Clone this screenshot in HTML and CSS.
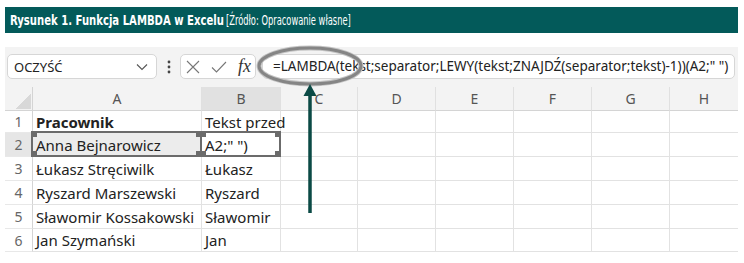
FILE: index.html
```html
<!DOCTYPE html>
<html lang="pl">
<head>
    <meta charset="UTF-8">
    <meta name="viewport" content="width=device-width, initial-scale=1.0">
    <title>Funkcja LAMBDA w Excelu</title>
    <link rel="stylesheet" href="styles.css">
</head>
<body>
    <div class="page">
        <div class="caption">
            <b>Rysunek 1. Funkcja LAMBDA w Excelu</b><span>[Źródło: Opracowanie własne]</span>
        </div>

        <div class="excel">
            <div class="toolbar">
                <div class="namebox">
                    <span>OCZYŚĆ</span>
                    <svg width="12" height="8" viewBox="0 0 12 8"><path d="M1 1.5 L6 6.5 L11 1.5" fill="none" stroke="#555" stroke-width="1.1"/></svg>
                </div>
                <div class="dots">
                    <svg width="4" height="14" viewBox="0 0 4 14"><circle cx="2" cy="2" r="1.4" fill="#444"/><circle cx="2" cy="7" r="1.4" fill="#444"/><circle cx="2" cy="12" r="1.4" fill="#444"/></svg>
                </div>
                <div class="fxbox">
                    <svg width="14" height="14" viewBox="0 0 14 14"><path d="M1 1 L13 13 M13 1 L1 13" stroke="#777" stroke-width="1.1" fill="none"/></svg>
                    <svg width="16" height="12" viewBox="0 0 16 12"><path d="M1 6.5 L5.5 11 L15 1" stroke="#777" stroke-width="1.1" fill="none"/></svg>
                    <span class="fx">fx</span>
                </div>
                <div class="formula">=LAMBDA(tekst;separator;LEWY(tekst;ZNAJDŹ(separator;tekst)-1))(A2;" ")</div>
            </div>

            <div class="sheet">
                <div class="corner"></div>
                <div class="colhead">A</div>
                <div class="colhead active">B</div>
                <div class="colhead">C</div>
                <div class="colhead">D</div>
                <div class="colhead">E</div>
                <div class="colhead">F</div>
                <div class="colhead">G</div>
                <div class="colhead last">H</div>

                <div class="rowhead r1">1</div>
                <div class="cell bold">Pracownik</div>
                <div class="cell">Tekst przed</div>
                <div class="cell"></div><div class="cell"></div><div class="cell"></div><div class="cell"></div><div class="cell"></div><div class="cell last"></div>

                <div class="rowhead active">2</div>
                <div class="cell ref">Anna Bejnarowicz</div>
                <div class="cell ref edit">A2;" ")</div>
                <div class="cell"></div><div class="cell"></div><div class="cell"></div><div class="cell"></div><div class="cell"></div><div class="cell last"></div>

                <div class="rowhead">3</div>
                <div class="cell">Łukasz Stręciwilk</div>
                <div class="cell">Łukasz</div>
                <div class="cell"></div><div class="cell"></div><div class="cell"></div><div class="cell"></div><div class="cell"></div><div class="cell last"></div>

                <div class="rowhead">4</div>
                <div class="cell">Ryszard Marszewski</div>
                <div class="cell">Ryszard</div>
                <div class="cell"></div><div class="cell"></div><div class="cell"></div><div class="cell"></div><div class="cell"></div><div class="cell last"></div>

                <div class="rowhead">5</div>
                <div class="cell">Sławomir Kossakowski</div>
                <div class="cell">Sławomir</div>
                <div class="cell"></div><div class="cell"></div><div class="cell"></div><div class="cell"></div><div class="cell"></div><div class="cell last"></div>

                <div class="rowhead">6</div>
                <div class="cell">Jan Szymański</div>
                <div class="cell">Jan</div>
                <div class="cell"></div><div class="cell"></div><div class="cell"></div><div class="cell"></div><div class="cell"></div><div class="cell last"></div>
            </div>
        </div>

        <!-- annotation: ring around the formula and arrow pointing to it -->
        <svg class="annot" width="744" height="263" viewBox="0 0 744 263">
            <ellipse cx="310" cy="66" rx="51" ry="18" fill="none" stroke="#c4c4c4" stroke-width="5"/>
            <ellipse cx="310" cy="66" rx="51" ry="18" fill="none" stroke="#858585" stroke-width="3"/>
            <line x1="310" y1="94" x2="310" y2="213" stroke="#0b4a45" stroke-width="3.5"/>
            <polygon points="310,84 303.5,96 316.5,96" fill="#0b4a45"/>
        </svg>
    </div>
</body>
</html>
```

FILE: styles.css
```css
* {
    margin: 0;
    padding: 0;
    box-sizing: border-box;
}
body {
    background: white;
    width: 744px;
    height: 263px;
    overflow: hidden;
}
.page {
    position: relative;
    padding: 7px 6px 0 5px;
}
.caption {
    height: 26px;
    background: #035a5a;
    color: white;
    padding-left: 5px;
    display: flex;
    align-items: center;
    font-family: 'DejaVu Sans Condensed', 'Liberation Sans', sans-serif;
    font-size: 14px;
    white-space: nowrap;
}
.caption b {
    flex: none;
    width: 280px;
    font-weight: bold;
    transform: scaleX(0.80);
    transform-origin: left center;
    margin-right: -64px;
}
.caption span {
    flex: none;
    font-size: 14px;
    transform: scaleX(0.66);
    transform-origin: left center;
}
.excel {
    margin-top: 14px;
    font-family: 'Noto Sans', 'Open Sans', sans-serif;
}
.toolbar {
    height: 40px;
    background: #f3f3f3;
    display: flex;
    align-items: flex-start;
    padding: 7px 0 0 2px;
}
.namebox, .fxbox, .formula {
    height: 25px;
    background: white;
    border: 1px solid #d6d6d6;
    border-radius: 5px;
}
.namebox {
    width: 150px;
    display: flex;
    align-items: center;
    justify-content: space-between;
    padding: 0 8px 0 6px;
    font-size: 13px;
    color: #222;
}
.dots {
    width: 23px;
    height: 25px;
    display: flex;
    align-items: center;
    justify-content: center;
}
.fxbox {
    width: 76px;
    display: flex;
    align-items: center;
    padding-left: 5px;
    gap: 11px;
}
.fx {
    font-family: 'Liberation Serif', serif;
    font-style: italic;
    font-size: 18px;
    color: #333;
}
.formula {
    margin-left: 6px;
    width: 473px;
    padding-left: 10px;
    font-size: 13.5px;
    line-height: 23px;
    color: #222;
    white-space: nowrap;
    overflow: hidden;
}
.sheet {
    display: grid;
    grid-template-columns: 28px 169px 79px 77px 78px 78px 78px 78px 68px;
    grid-template-rows: 24px 22px 24px 24px 24px 24px 23px;
    font-size: 15px;
    color: #222;
}
.corner {
    background: #f3f3f3 linear-gradient(135deg, transparent 58%, #d8d8d8 58%) no-repeat;
    background-size: 18px 18px;
    background-position: 8px 4px;
    border-bottom: 1px solid #d4d4d4;
    border-right: 1px solid #d4d4d4;
}
.colhead {
    background: #f3f3f3;
    border-bottom: 1px solid #d4d4d4;
    border-right: 1px solid #e0e0e0;
    color: #555;
    font-size: 14px;
    display: flex;
    align-items: center;
    justify-content: center;
}
.colhead.active {
    background: #e1e1e1;
}
.colhead.last, .cell.last {
    border-right: none;
}
.rowhead {
    background: white;
    border-right: 1px solid #d4d4d4;
    border-bottom: 1px solid #e8e8e8;
    color: #666;
    font-size: 14px;
    display: flex;
    align-items: center;
    justify-content: center;
}
.rowhead.active {
    background: #e6e6e6;
}
.cell {
    border-right: 1px solid #e2e2e2;
    border-bottom: 1px solid #e2e2e2;
    padding-left: 3px;
    display: flex;
    align-items: center;
    white-space: nowrap;
    overflow: visible;
}
.bold {
    font-weight: bold;
}
.ref {
    position: relative;
    background: #ececec;
}
.ref.edit {
    background: white;
}
.ref::after {
    content: "";
    position: absolute;
    inset: -2px -1px -1px -2px;
    border: 2px solid #6b6b6b;
    background:
        linear-gradient(#6b6b6b, #6b6b6b) left top / 4px 4px no-repeat,
        linear-gradient(#6b6b6b, #6b6b6b) right top / 4px 4px no-repeat,
        linear-gradient(#6b6b6b, #6b6b6b) left bottom / 4px 4px no-repeat,
        linear-gradient(#6b6b6b, #6b6b6b) right bottom / 4px 4px no-repeat;
}
.annot {
    position: absolute;
    left: 0;
    top: 0;
    pointer-events: none;
}
```
